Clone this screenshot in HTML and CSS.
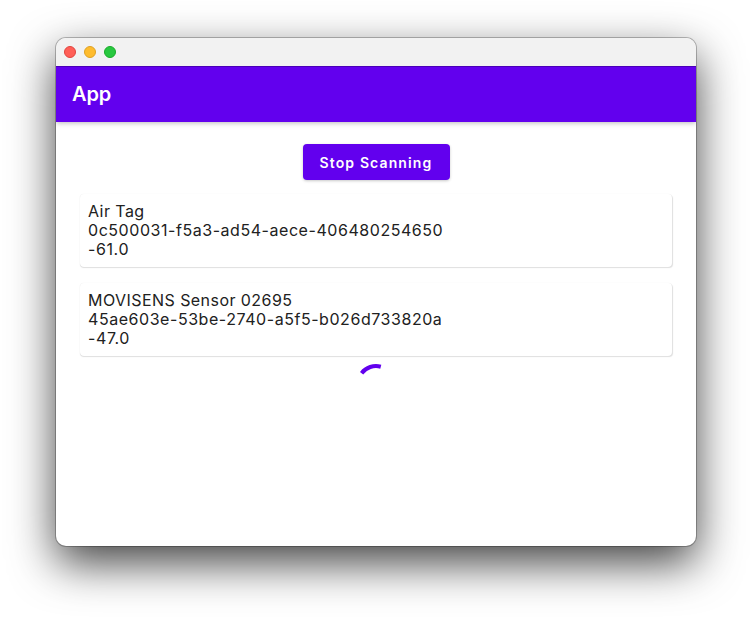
FILE: index.html
```html
<!DOCTYPE html>
<html lang="en">
<head>
<meta charset="utf-8">
<title>App</title>
<link rel="stylesheet" href="styles.css">
</head>
<body>
<main class="window">
  <div class="titlebar">
    <span class="light close"></span>
    <span class="light minimize"></span>
    <span class="light maximize"></span>
  </div>
  <header class="appbar"><h1>App</h1></header>
  <section class="content">
    <button class="scan">Stop Scanning</button>
    <div class="devices">
      <article class="card">
        <div class="name">Air Tag</div>
        <div class="uuid">0c500031-f5a3-ad54-aece-406480254650</div>
        <div class="signal">-61.0</div>
      </article>
      <article class="card">
        <div class="name">MOVISENS Sensor 02695</div>
        <div class="uuid">45ae603e-53be-2740-a5f5-b026d733820a</div>
        <div class="signal">-47.0</div>
      </article>
    </div>
    <svg class="spinner" width="40" height="40" viewBox="0 0 40 40">
      <path d="M5.6 9.2A18 18 0 0 1 24.8 2.7" fill="none" stroke="#6200ee" stroke-width="4"/>
    </svg>
  </section>
</main>
</body>
</html>
```
FILE: styles.css
```css
* { box-sizing: border-box; }

body {
  margin: 0;
  height: 620px;
  padding: 38px 56px 74px;
  overflow: hidden;
  background: #fff;
  font-family: Inter, sans-serif;
  color: #212121;
}

.window {
  height: 508px;
  border-radius: 10px;
  overflow: hidden;
  background: #fff;
  box-shadow: 0 0 0 1px rgba(0, 0, 0, .25), 0 17px 45px rgba(0, 0, 0, .74);
}

.titlebar {
  position: relative;
  display: flex;
  align-items: center;
  gap: 8px;
  height: 28px;
  padding-left: 8px;
  background: #f2f2f2;
}

.light {
  width: 12px;
  height: 12px;
  border: 1px solid;
  border-radius: 50%;
}

.close { background: #ff5f57; border-color: #e0443e; }
.minimize { background: #febc2e; border-color: #dea123; }
.maximize { background: #28c840; border-color: #1aab29; }

.appbar {
  display: flex;
  align-items: center;
  height: 56px;
  padding: 0 16px 2px;
  background: #6200ee;
  color: #fff;
  border-top: 1px solid #4a00b8;
  box-shadow: 0 1px 5px rgba(0, 0, 0, .28);
}

.appbar h1 {
  margin: 0;
  font-size: 20px;
  line-height: 24px;
  font-weight: 600;
  letter-spacing: -.1px;
}

.content {
  display: flex;
  flex-direction: column;
  align-items: center;
  padding: 22px 24px 0;
}

.scan {
  width: 147px;
  height: 36px;
  padding: 0;
  border: 0;
  border-radius: 4px;
  background: #6200ee;
  color: #fff;
  font: 600 14px/17px Inter, sans-serif;
  letter-spacing: 1.12px;
  white-space: nowrap;
  box-shadow: 0 1px 3px rgba(0, 0, 0, .22);
}

.devices {
  display: flex;
  flex-direction: column;
  align-self: stretch;
  gap: 16px;
  margin: 14px 0 8px;
}

.card {
  height: 73px;
  padding: 8px;
  border-radius: 4px;
  background: #fff;
  box-shadow: 0 0 1px rgba(0, 0, 0, .1), .5px 1px 1px rgba(0, 0, 0, .12);
  font-size: 16px;
  line-height: 19px;
  letter-spacing: .5px;
}

.name { letter-spacing: .44px; }
.uuid { letter-spacing: .55px; }
.signal { letter-spacing: .6px; }

.spinner { display: block; }
```
